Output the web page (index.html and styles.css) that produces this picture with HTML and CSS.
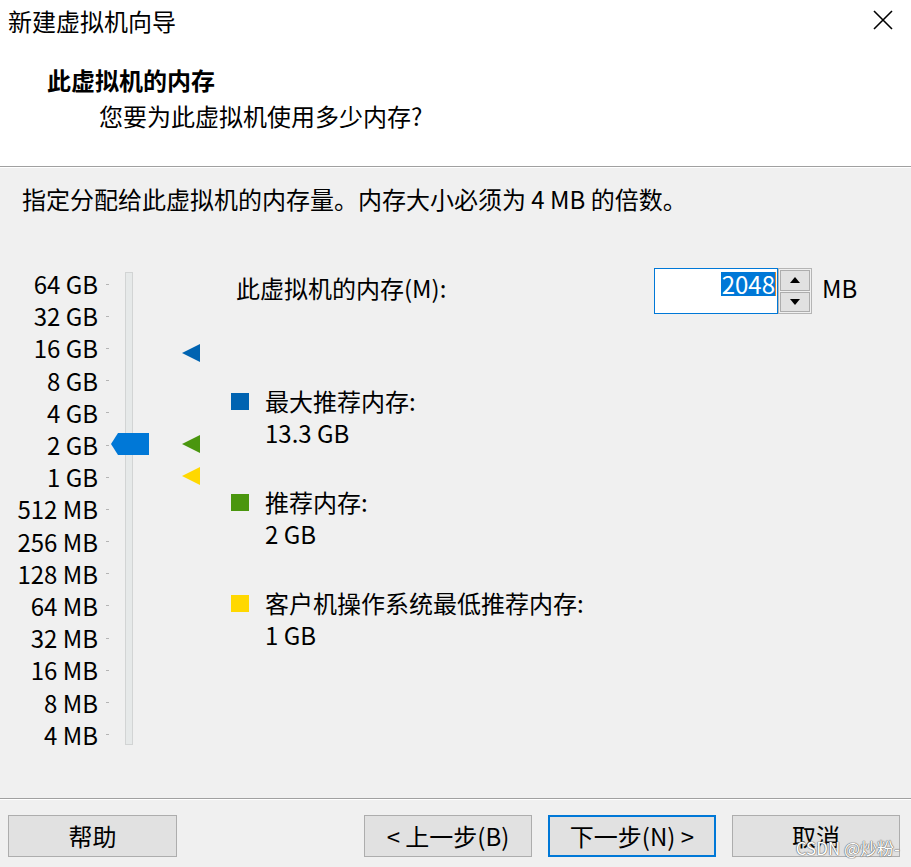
FILE: index.html
```html
<!DOCTYPE html>
<html lang="zh-CN">
<head>
<meta charset="utf-8">
<title>新建虚拟机向导</title>
<link rel="stylesheet" href="styles.css">
</head>
<body>
<div class="dialog">
  <header class="header">
    <div class="titlebar">
      <span class="title">新建虚拟机向导</span>
      <svg class="close" width="20" height="20" viewBox="0 0 20 20"><path d="M1 1 L19 19 M19 1 L1 19" stroke="#000" stroke-width="1.6" fill="none"/></svg>
    </div>
    <div class="heading">此虚拟机的内存</div>
    <div class="subheading">您要为此虚拟机使用多少内存?</div>
  </header>
  <main class="main">
    <p class="instr">指定分配给此虚拟机的内存量。内存大小必须为 4 MB 的倍数。</p>
    <div class="area">
      <div class="slider">
        <div class="labels">
          <div class="row"><span class="lbl">64 GB</span><span class="tick"></span></div>
          <div class="row"><span class="lbl">32 GB</span><span class="tick"></span></div>
          <div class="row"><span class="lbl">16 GB</span><span class="tick"></span></div>
          <div class="row"><span class="lbl">8 GB</span><span class="tick"></span></div>
          <div class="row"><span class="lbl">4 GB</span><span class="tick"></span></div>
          <div class="row"><span class="lbl">2 GB</span><span class="tick"></span></div>
          <div class="row"><span class="lbl">1 GB</span><span class="tick"></span></div>
          <div class="row"><span class="lbl">512 MB</span><span class="tick"></span></div>
          <div class="row"><span class="lbl">256 MB</span><span class="tick"></span></div>
          <div class="row"><span class="lbl">128 MB</span><span class="tick"></span></div>
          <div class="row"><span class="lbl">64 MB</span><span class="tick"></span></div>
          <div class="row"><span class="lbl">32 MB</span><span class="tick"></span></div>
          <div class="row"><span class="lbl">16 MB</span><span class="tick"></span></div>
          <div class="row"><span class="lbl">8 MB</span><span class="tick"></span></div>
          <div class="row"><span class="lbl">4 MB</span><span class="tick"></span></div>
        </div>
        <div class="track"></div>
        <svg class="thumb" width="38" height="22" viewBox="0 0 38 22"><path d="M0 11 L7 0 H38 V22 H7 Z" fill="#0078d7"/></svg>
        <svg class="mark mark-max" width="18" height="18" viewBox="0 0 18 18"><path d="M0 9 L18 0 V18 Z" fill="#0063b1"/></svg>
        <svg class="mark mark-rec" width="18" height="18" viewBox="0 0 18 18"><path d="M0 9 L18 0 V18 Z" fill="#4a960e"/></svg>
        <svg class="mark mark-min" width="18" height="18" viewBox="0 0 18 18"><path d="M0 9 L18 0 V18 Z" fill="#ffd800"/></svg>
      </div>
      <div class="panel">
        <div class="memrow">
          <span class="memlabel">此虚拟机的内存(M):</span>
          <div class="input"><span class="sel">2048</span><span class="caret"></span></div>
          <div class="spin">
            <div class="spinbtn"><svg width="10" height="6" viewBox="0 0 10 6"><path d="M0 6 L5 0 L10 6 Z" fill="#000"/></svg></div>
            <div class="spinbtn"><svg width="10" height="6" viewBox="0 0 10 6"><path d="M0 0 L5 6 L10 0 Z" fill="#000"/></svg></div>
          </div>
          <span class="unit">MB</span>
        </div>
        <div class="legend">
          <div class="item">
            <div class="itemhead"><span class="sq sq-max"></span><span>最大推荐内存:</span></div>
            <div class="val">13.3 GB</div>
          </div>
          <div class="item">
            <div class="itemhead"><span class="sq sq-rec"></span><span>推荐内存:</span></div>
            <div class="val">2 GB</div>
          </div>
          <div class="item">
            <div class="itemhead"><span class="sq sq-min"></span><span>客户机操作系统最低推荐内存:</span></div>
            <div class="val">1 GB</div>
          </div>
        </div>
      </div>
    </div>
  </main>
  <footer class="footer">
    <button class="btn">帮助</button>
    <div class="spacer"></div>
    <button class="btn">&lt; 上一步(B)</button>
    <button class="btn primary">下一步(N) &gt;</button>
    <button class="btn">取消</button>
    <span class="watermark">CSDN @炒粉-</span>
  </footer>
</div>
</body>
</html>
```

FILE: styles.css
```css
* { box-sizing: border-box; }
html, body { margin: 0; padding: 0; }
body {
  width: 911px;
  height: 867px;
  background: #f0f0f0;
  font-family: "Noto Sans CJK SC", "Noto Sans", sans-serif;
  font-size: 24px;
  color: #000;
  overflow: hidden;
}
.dialog {
  width: 911px;
  height: 867px;
  display: flex;
  flex-direction: column;
  position: relative;
}
.header {
  background: #fff;
  height: 167px;
  border-bottom: 1px solid #a0a0a0;
  flex: none;
}
.titlebar {
  height: 42px;
  display: flex;
  align-items: center;
  padding-left: 8px;
  padding-right: 18px;
}
.title { line-height: 42px; flex: 1; }
.close { flex: none; margin-top: -2px; }
.heading {
  margin-top: 22px;
  padding-left: 47px;
  line-height: 32px;
  font-weight: bold;
}
.subheading {
  margin-top: 4px;
  padding-left: 99px;
  line-height: 32px;
}
.main {
  flex: none;
  height: 631px;
  border-top: 1px solid #fff;
}
.instr {
  margin: 15px 0 0 22px;
  line-height: 32px;
}
.area {
  display: flex;
  margin-top: 53px;
}
.slider {
  position: relative;
  width: 231px;
  flex: none;
  display: flex;
}
.labels { display: flex; flex-direction: column; }
.row {
  height: 32.2px;
  display: flex;
  align-items: center;
}
.lbl {
  width: 98px;
  text-align: right;
  line-height: 32px;
}
.tick {
  width: 3px;
  height: 1px;
  background: #b4b4b4;
  margin-left: 8px;
}
.track {
  margin-left: 16px;
  margin-top: 4px;
  width: 8px;
  height: 473px;
  background: #e6e9e9;
  border: 1px solid #d2d4d4;
}
.thumb { position: absolute; left: 111px; top: 165px; }
.mark { position: absolute; left: 182px; }
.mark-max { top: 76px; }
.mark-rec { top: 167px; }
.mark-min { top: 199px; }
.panel {
  flex: 1;
  display: flex;
  flex-direction: column;
}
.memrow {
  display: flex;
  align-items: center;
  height: 46px;
}
.memlabel {
  width: 423px;
  padding-left: 5px;
  line-height: 32px;
  margin-bottom: 6px;
}
.input {
  width: 124px;
  height: 46px;
  background: #fff;
  border: 1px solid #0078d7;
  display: flex;
  justify-content: flex-end;
  align-items: center;
  padding-right: 1px;
}
.sel {
  background: #0078d7;
  color: #fff;
  line-height: 24px;
  height: 24px;
  padding: 0 0 0 1px;
  margin-top: -14px;
}
.caret {
  width: 1px;
  height: 24px;
  background: #e08a2c;
  margin-top: -14px;
}
.spin {
  width: 34px;
  height: 46px;
  border: 1px solid #b5b5b5;
  background: #f0f0f0;
  display: flex;
  flex-direction: column;
  gap: 1px;
  padding: 1px;
}
.spinbtn {
  flex: 1;
  background: #e1e1e1;
  border: 1px solid #adadad;
  display: flex;
  align-items: center;
  justify-content: center;
}
.unit { margin-left: 10px; line-height: 32px; margin-bottom: 6px; }
.legend {
  margin-top: 71px;
  display: flex;
  flex-direction: column;
  gap: 37px;
}
.itemhead {
  display: flex;
  align-items: center;
  height: 32px;
  line-height: 32px;
}
.sq {
  width: 18px;
  height: 17px;
  margin-right: 16px;
  flex: none;
}
.sq-max { background: #0063b1; }
.sq-rec { background: #4a960e; }
.sq-min { background: #ffd800; }
.val {
  padding-left: 34px;
  height: 32px;
  line-height: 32px;
}
.footer {
  flex: none;
  height: 69px;
  border-top: 1px solid #a0a0a0;
  box-shadow: inset 0 1px 0 #fff;
  display: flex;
  align-items: flex-start;
  padding: 16px 11px 0 8px;
  gap: 16px;
  position: relative;
}
.spacer { flex: 1; }
.btn {
  width: 168px;
  height: 42px;
  background: #e1e1e1;
  border: 1px solid #adadad;
  font-family: "Noto Sans CJK SC", "Noto Sans", sans-serif;
  font-size: 24px;
  color: #000;
  padding: 0;
  line-height: 38px;
}
.btn:first-child { width: 169px; }
.btn.primary { border: 2px solid #0078d7; }
.watermark {
  position: absolute;
  right: 11px;
  top: 36px;
  font-size: 17px;
  color: #fff;
  text-shadow: 0 0 1px #666, 0 0 1px #666, 0 0 1px #666;
}
```
